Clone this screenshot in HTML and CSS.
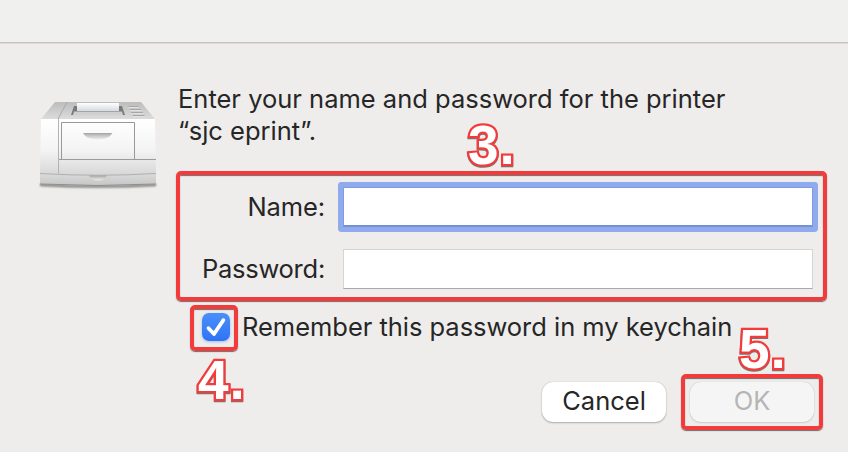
FILE: index.html
```html
<!DOCTYPE html>
<html lang="en">
<head>
  <meta charset="UTF-8" />
  <meta name="viewport" content="width=device-width, initial-scale=1.0" />
  <title>Printer sign in</title>
  <link rel="stylesheet" href="styles.css">
</head>
<body>
  <header class="titlebar"></header>

  <main class="dialog">
    <svg class="printer" width="124" height="100" viewBox="0 0 124 100">
      <defs>
        <linearGradient id="top" x1="0" y1="0" x2="0" y2="1">
          <stop offset="0" stop-color="#bcbcbc" />
          <stop offset="1" stop-color="#dcdcdc" />
        </linearGradient>
        <linearGradient id="front" x1="0" y1="0" x2="0" y2="1">
          <stop offset="0" stop-color="#ffffff" />
          <stop offset="0.55" stop-color="#f4f4f4" />
          <stop offset="1" stop-color="#d6d6d6" />
        </linearGradient>
        <linearGradient id="base" x1="0" y1="0" x2="0" y2="1">
          <stop offset="0" stop-color="#dadada" />
          <stop offset="1" stop-color="#c6c6c6" />
        </linearGradient>
        <linearGradient id="paper" x1="0" y1="0" x2="0" y2="1">
          <stop offset="0" stop-color="#ffffff" />
          <stop offset="1" stop-color="#d5d9e2" />
        </linearGradient>
        <linearGradient id="handle" x1="0" y1="0" x2="0" y2="1">
          <stop offset="0" stop-color="#a2a4a1" />
          <stop offset="0.4" stop-color="#c6c7c5" />
          <stop offset="1" stop-color="#eeeeee" />
        </linearGradient>
        <filter id="blur" x="-10%" y="-100%" width="120%" height="300%">
          <feGaussianBlur stdDeviation="1" />
        </filter>
      </defs>
      <path d="M4 86 Q62 89 120 86L120 88Q62 91 4 88Z" fill="#666" filter="url(#blur)" />
      <path d="M19 4H105L119 21H5Z" fill="url(#top)" />
      <path d="M31 4 22 21" stroke="#aaa" />
      <path d="M38 8H86L89 17H35Z" fill="#777a76" />
      <path d="M41 5H83V13H41Z" fill="url(#paper)" />
      <path d="M38 13.500H86L87 17H37Z" fill="#cfcfcf" />
      <path d="M92.500 8.500h10M94 11.500h11M95 14.500h12M96.500 17.500h12" stroke="#a6a6a6" />
      <path d="M92.500 9.500h10M94 12.500h11M95 15.500h12M96.500 18.500h12" stroke="#e2e2e2" />
      <path d="M5 21H119L120 76Q62 79 4 76Z" fill="url(#front)" />
      <path d="M22.500 21V75.500" stroke="#b3b3b3" />
      <path d="M25.500 61.500V24.500H98.500V61.500" fill="none" stroke="#989898" />
      <path d="M23 61.500H120" stroke="#9b9b9b" />
      <path d="M47 35H76.500Q73 41.500 61.500 41.500T47 35Z" fill="url(#handle)" />
      <path d="M4 75.500Q62 79 120 75.500L120 86Q62 89 4 86Z" fill="url(#base)" />
      <path d="M4 75.500Q62 79 120 75.500" fill="none" stroke="#b0b0b0" />
      <path d="M4 86Q62 89 120 86" fill="none" stroke="#8d8d8d" />
      <path d="M53 77.500H71Q69 82.500 62 82.500T53 77.500Z" fill="url(#handle)" />
    </svg>

    <form class="login">
      <p class="prompt">Enter your name and password for the printer<br />“sjc eprint”.</p>

      <div class="field">
        <label class="name-label" for="name">Name:</label>
        <input class="input focused" type="text" id="name" />
      </div>
      <div class="field">
        <label class="password-label" for="password">Password:</label>
        <input class="input" type="password" id="password" />
      </div>

      <div class="remember">
        <span class="checkbox">
          <svg width="28" height="28" viewBox="0 0 28 28">
            <path d="M6.500 15.200 12 21 21.300 7.200" fill="none" stroke="#fff" stroke-width="3.800" stroke-linecap="round" stroke-linejoin="round" />
          </svg>
        </span>
        <span class="remember-label">Remember this password in my keychain</span>
      </div>

      <div class="buttons">
        <button class="btn" type="button">Cancel</button>
        <button class="btn" type="button" disabled>OK</button>
      </div>
    </form>
  </main>

  <!-- step markers over the dialog -->
  <div class="frame frame-fields"></div>
  <div class="frame frame-check"></div>
  <div class="frame frame-ok"></div>
  <div class="step step-three">3.</div>
  <div class="step step-four">4.</div>
  <div class="step step-five">5.</div>
</body>
</html>
```
FILE: styles.css
```css
* {
  box-sizing: border-box;
}
body {
  margin: 0;
  width: 848px;
  height: 452px;
  overflow: hidden;
  position: relative;
  background-color: #eeedeb;
  color: #262626;
  font-family: Inter, "Liberation Sans", sans-serif;
  font-size: 25.5px;
  line-height: 32px;
}
.titlebar {
  height: 44px;
  background-color: #f0f0ee;
  border-bottom: 1px solid #dddcda;
  box-shadow: inset 0 -1px 0 #c3c2c0;
}
.dialog {
  display: flex;
  padding: 39px 35px 0 36px;
}
.printer {
  flex: none;
  margin: 15px 18px 0 0;
}
.login {
  flex: 1;
  min-width: 0;
}
.prompt {
  margin: 0 0 40px;
  white-space: nowrap;
}
.field {
  display: flex;
  align-items: center;
  height: 40px;
  margin-bottom: 22px;
}
.field label {
  width: 147px;
  margin-right: 18px;
  text-align: right;
  white-space: nowrap;
}
.name-label {
  letter-spacing: -0.1px;
}
.password-label {
  letter-spacing: -0.25px;
}
.input {
  flex: 1;
  min-width: 0;
  height: 40px;
  border: 1px solid #d6d5d3;
  border-bottom-color: #aaa9a7;
  background-color: #fff;
  font: inherit;
  outline: none;
}
.input.focused {
  border: 1px solid #7f9be3;
  border-bottom: 2px solid #7590d3;
  box-shadow: 0 0 0 5px #90abed;
  border-radius: 1px;
}
.remember {
  display: flex;
  align-items: center;
  height: 32px;
  padding-left: 24px;
  white-space: nowrap;
}
.remember-label {
  letter-spacing: -0.03px;
}
.checkbox {
  width: 28px;
  height: 28px;
  margin: -1px 12px 0 0;
  border-radius: 7px;
  background: linear-gradient(#4a8ff8, #2f73f5);
  box-shadow: 0 1px 3px rgba(60, 120, 240, 0.4);
}
.checkbox svg {
  display: block;
}
.buttons {
  display: flex;
  justify-content: flex-end;
  gap: 24px;
  margin: 39px -1px 0 0;
}
.btn {
  width: 124px;
  height: 40px;
  padding: 0 0 2px;
  border: none;
  border-radius: 11px;
  background-color: #fff;
  box-shadow: 0 0 1px rgba(0, 0, 0, 0.3), 0 1px 2px rgba(0, 0, 0, 0.25);
  color: #262626;
  font: inherit;
}
.btn:disabled {
  background-color: #f5f5f5;
  box-shadow: 0 0 1px rgba(0, 0, 0, 0.2), 0 1px 2px rgba(0, 0, 0, 0.12);
  color: #b5b5b5;
}

.frame {
  position: absolute;
  border: 4px solid #f33b3c;
  border-radius: 5px;
  box-shadow: 0 1px 1px rgba(0, 0, 0, 0.55), inset 0 1px 1px rgba(0, 0, 0, 0.55);
}
.frame-fields {
  left: 176px;
  top: 171px;
  width: 651px;
  height: 130px;
}
.frame-check {
  left: 190px;
  top: 305px;
  width: 48px;
  height: 46px;
}
.frame-ok {
  left: 681px;
  top: 374px;
  width: 142px;
  height: 56px;
}
.step {
  position: absolute;
  color: #fff;
  font-family: "Liberation Sans", Arial, sans-serif;
  font-size: 55px;
  font-weight: bold;
  line-height: 60px;
  letter-spacing: 1px;
  -webkit-text-stroke: 4.5px #f33b3c;
  paint-order: stroke fill;
  stroke-linejoin: round;
  filter: drop-shadow(0 1px 0.5px rgba(0, 0, 0, 0.5));
}
.step-three {
  left: 468px;
  top: 115px;
}
.step-four {
  left: 198px;
  top: 350px;
}
.step-five {
  left: 739px;
  top: 319px;
}
```
